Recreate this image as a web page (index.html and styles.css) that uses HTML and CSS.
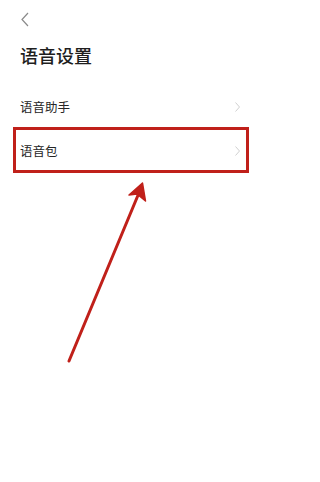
FILE: index.html
```html
<!DOCTYPE html>
<html lang="zh">
<head>
<meta charset="utf-8">
<link rel="stylesheet" href="styles.css">
</head>
<body>
<div class="page">
  <div class="topbar">
    <svg class="back" width="8" height="15" viewBox="0 0 8 15"><path d="M7 1 L1 7.5 L7 14" fill="none" stroke="#8a8a8a" stroke-width="1.2"/></svg>
  </div>
  <h1 class="title">语音设置</h1>
  <div class="list">
    <div class="row"><span class="label">语音助手</span><svg class="chev" width="5" height="10" viewBox="0 0 5 10"><path d="M0.5 0.5 L4.5 5 L0.5 9.5" fill="none" stroke="#d0d0d0" stroke-width="1"/></svg></div>
    <div class="row"><span class="label">语音包</span><svg class="chev" width="5" height="10" viewBox="0 0 5 10"><path d="M0.5 0.5 L4.5 5 L0.5 9.5" fill="none" stroke="#d0d0d0" stroke-width="1"/></svg></div>
  </div>
  <div class="highlight"></div>
  <svg class="arrow" width="254" height="482" viewBox="0 0 254 482">
    <line x1="69" y1="361" x2="141" y2="188" stroke="#c0201a" stroke-width="3" stroke-linecap="round"/>
    <path d="M142.5 183 L129 195 L137 194 L145.5 201 Z" fill="#c0201a" stroke="#c0201a" stroke-width="1.5" stroke-linejoin="round"/>
  </svg>
</div>
</body>
</html>
```
FILE: styles.css
```css
html, body {
  margin: 0;
  padding: 0;
  background: #ffffff;
}
.page {
  position: relative;
  width: 254px;
  height: 482px;
  overflow: hidden;
  font-family: "Noto Sans CJK SC", "Noto Sans", sans-serif;
  color: #222222;
}
.topbar {
  height: 38px;
  padding-left: 21px;
  padding-top: 12px;
  box-sizing: border-box;
}
.back {
  display: block;
}
.title {
  margin: 0;
  padding-left: 20px;
  font-size: 18px;
  line-height: 26px;
  font-weight: 500;
  margin-top: 4px;
  color: #1e1e1e;
}
.list {
  margin-top: 17px;
}
.row {
  height: 44px;
  display: flex;
  align-items: center;
  justify-content: space-between;
  padding: 0 14px 0 20px;
}
.label {
  font-size: 12.5px;
  line-height: 18px;
  color: #262626;
}
.chev {
  display: block;
}
.highlight {
  position: absolute;
  left: 13px;
  top: 127px;
  width: 236px;
  height: 46px;
  box-sizing: border-box;
  border: 3px solid #c0201a;
}
.arrow {
  position: absolute;
  left: 0;
  top: 0;
}
```
